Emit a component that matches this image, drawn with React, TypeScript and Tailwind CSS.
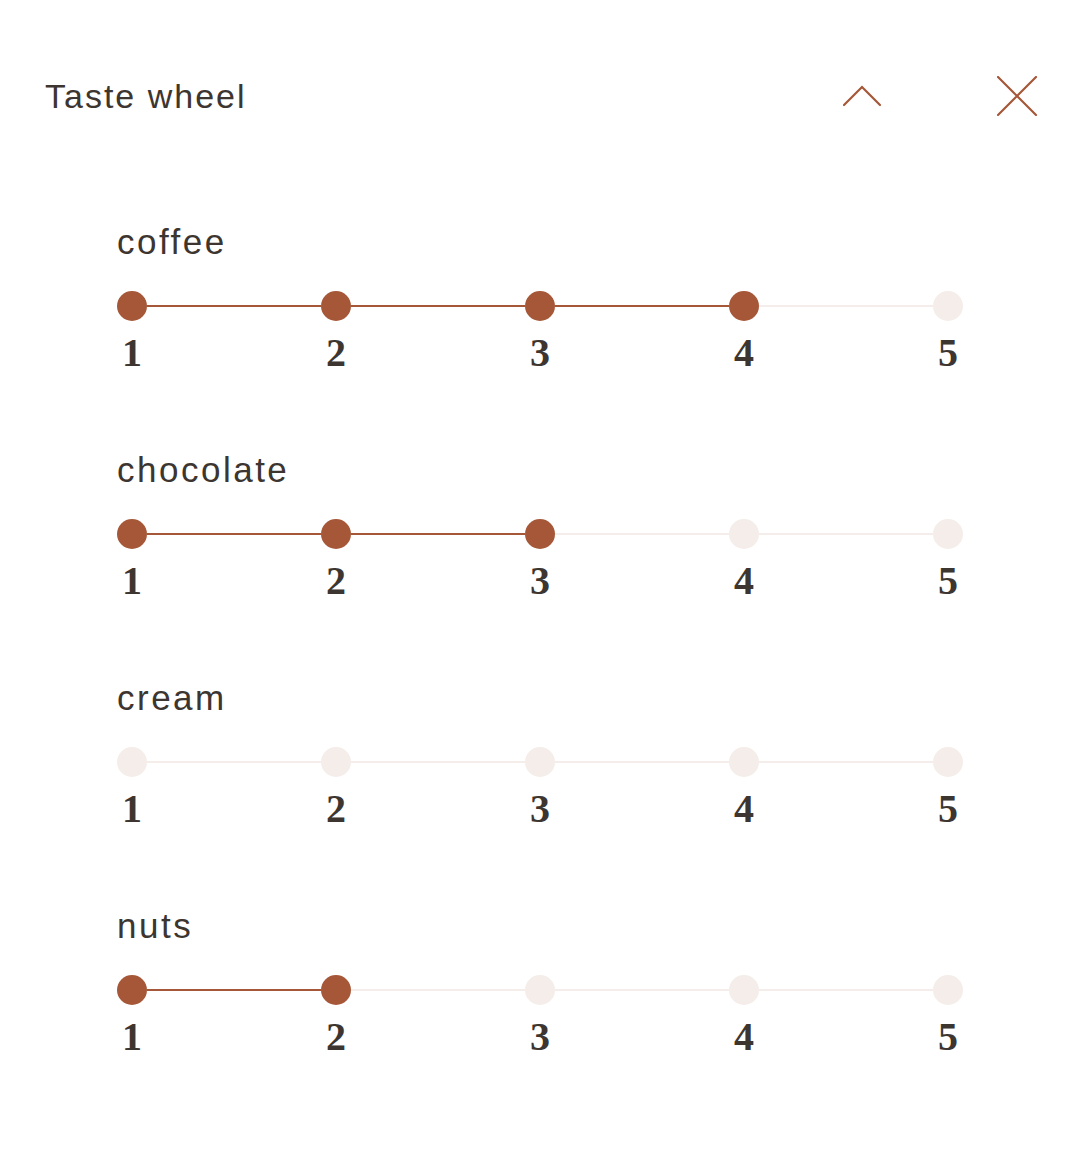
const tastes = [
  { name: "coffee", value: 4 },
  { name: "chocolate", value: 3 },
  { name: "cream", value: 0 },
  { name: "nuts", value: 2 },
];

const steps = [1, 2, 3, 4, 5];

function Scale({ value }: { value: number }) {
  return (
    <div className="w-[846px]">
      {/* Dots + connectors */}
      <div className="flex items-center h-[30px]">
        {steps.map((n) => (
          <div key={n} className={`flex items-center ${n === 1 ? "" : "flex-1"}`}>
            {n > 1 && (
              <div
                className={`flex-1 h-[2px] ${n <= value ? "bg-[#a65738]" : "bg-[#f5ede9]"}`}
              />
            )}
            <div
              className={`w-[30px] h-[30px] rounded-full flex-shrink-0 ${
                n <= value ? "bg-[#a65738]" : "bg-[#f5ede9]"
              }`}
            />
          </div>
        ))}
      </div>

      {/* Numbers */}
      <div className="flex justify-between mt-[10px]">
        {steps.map((n) => (
          <div
            key={n}
            className="w-[30px] text-center text-[40px] leading-[44px] font-bold text-[#3d3530]"
            style={{ fontFamily: '"Liberation Serif", serif' }}
          >
            {n}
          </div>
        ))}
      </div>
    </div>
  );
}

export default function App() {
  return (
    <div
      className="w-[1080px] h-[1170px] bg-white text-[#3d3530]"
      style={{ fontFamily: '"Liberation Sans", Arial, sans-serif' }}
    >
      {/* Header */}
      <div className="flex items-center pt-[76px] pl-[45px] pr-[43px]">
        <h1 className="flex-1 text-[34px] leading-[40px] font-normal tracking-[2px]">Taste wheel</h1>
        <button className="w-[40px] h-[40px] flex items-center justify-center mr-[115px]">
          <svg width="40" height="24" viewBox="0 0 40 24" fill="none">
            <path d="M2 21 L20 3 L38 21" stroke="#a65738" strokeWidth="2.2" strokeLinecap="round" />
          </svg>
        </button>
        <button className="w-[40px] h-[40px] flex items-center justify-center">
          <svg width="40" height="40" viewBox="0 0 40 40" fill="none">
            <path d="M1 1 L39 39 M39 1 L1 39" stroke="#a65738" strokeWidth="2.2" strokeLinecap="round" />
          </svg>
        </button>
      </div>

      {/* Scales */}
      <div className="pl-[117px] pt-[106px] flex flex-col gap-[75px]">
        {tastes.map((t) => (
          <div key={t.name}>
            <div className="text-[35px] leading-[40px] tracking-[2.5px] mb-[29px]">{t.name}</div>
            <Scale value={t.value} />
          </div>
        ))}
      </div>
    </div>
  );
}
